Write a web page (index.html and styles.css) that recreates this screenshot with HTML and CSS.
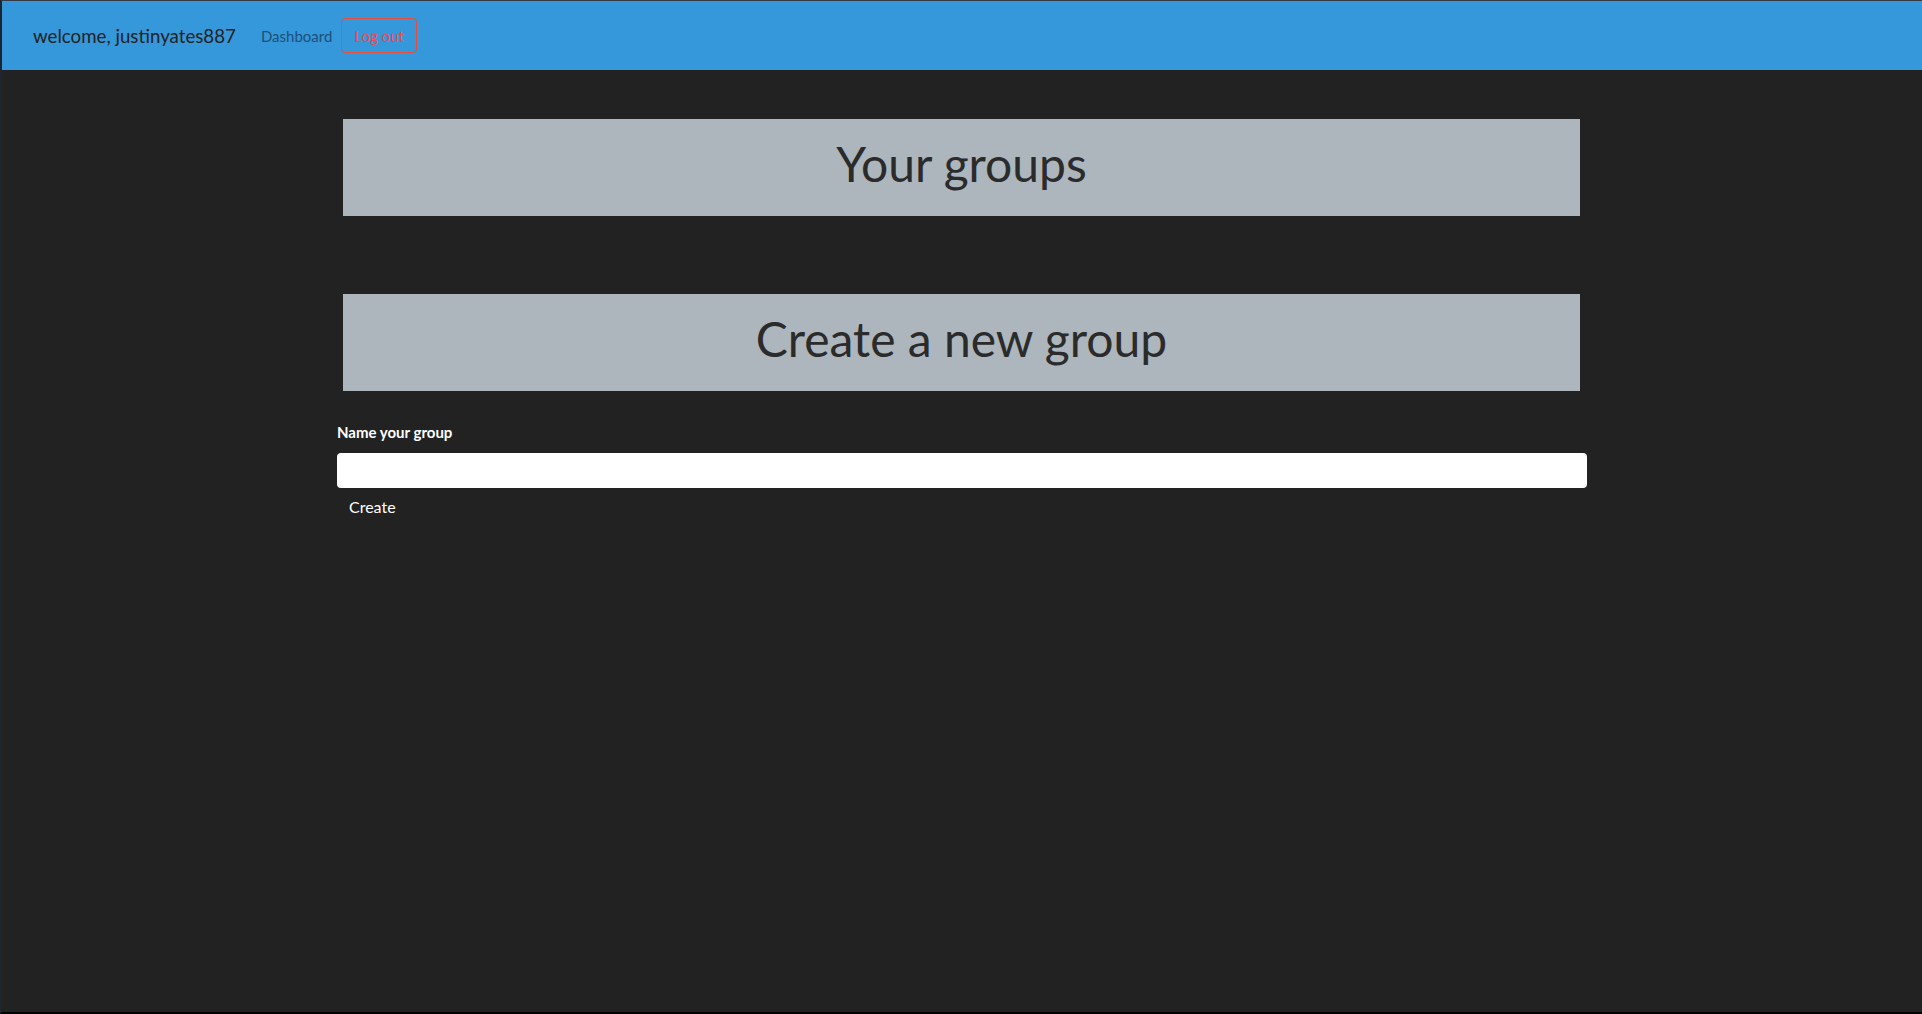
FILE: index.html
```html
<!DOCTYPE html>
<html lang="en">
<head>
<meta charset="utf-8">
<title>Groups</title>
<link rel="stylesheet" href="styles.css">
</head>
<body>
<nav class="navbar">
  <span class="brand">welcome, justinyates887</span>
  <a class="nav-link" href="#">Dashboard</a>
  <button class="logout" type="button">Log out</button>
</nav>
<main class="container">
  <h1 class="section-title">Your groups</h1>
  <h1 class="section-title second">Create a new group</h1>
  <form class="group-form">
    <label class="form-label" for="groupName">Name your group</label>
    <input class="form-input" id="groupName" type="text">
    <button class="create-btn" type="button">Create</button>
  </form>
</main>
</body>
</html>
```
FILE: styles.css
```css
* { box-sizing: border-box; }
html, body { height: 100%; }
body {
  margin: 0;
  background: #222222;
  font-family: Lato, "Open Sans", sans-serif;
  border-left: 2px solid #1c2530;
  border-top: 1px solid #363a44;
  border-bottom: 2px solid #000;
}
.navbar {
  height: 69px;
  background: #3498db;
  display: flex;
  align-items: center;
  padding-left: 31px;
}
.brand {
  font-size: 18.7px;
  color: #222;
  margin-right: 25px;
}
.nav-link {
  font-size: 15px;
  color: #1f4f75;
  text-decoration: none;
  margin-right: 9px;
}
.logout {
  height: 35px;
  padding: 0 12px;
  background: transparent;
  border: 1px solid #e74c3c;
  border-radius: 4px;
  color: #ec4c56;
  font-family: Lato, sans-serif;
  font-size: 15px;
}
.container {
  width: 1250px;
  margin: 0 auto;
  padding-top: 49px;
}
.section-title {
  margin: 0 7px 0 6px;
  height: 97px;
  padding-top: 16px;
  background: #adb5bd;
  color: #2b2b2b;
  font-size: 48px;
  font-weight: 400;
  line-height: 1.2;
  text-align: center;
}
.section-title.second { margin-top: 78px; }
.group-form { padding-top: 32px; }
.form-label {
  display: block;
  color: #fff;
  font-size: 15px;
  font-weight: 700;
  margin-bottom: 12px;
}
.form-input {
  display: block;
  width: 100%;
  height: 35px;
  border: none;
  border-radius: 4px;
  background: #fff;
}
.create-btn {
  margin-top: 5px;
  padding: 4px 12px;
  background: none;
  border: none;
  color: #fff;
  font-family: Lato, sans-serif;
  font-size: 16px;
}
```
